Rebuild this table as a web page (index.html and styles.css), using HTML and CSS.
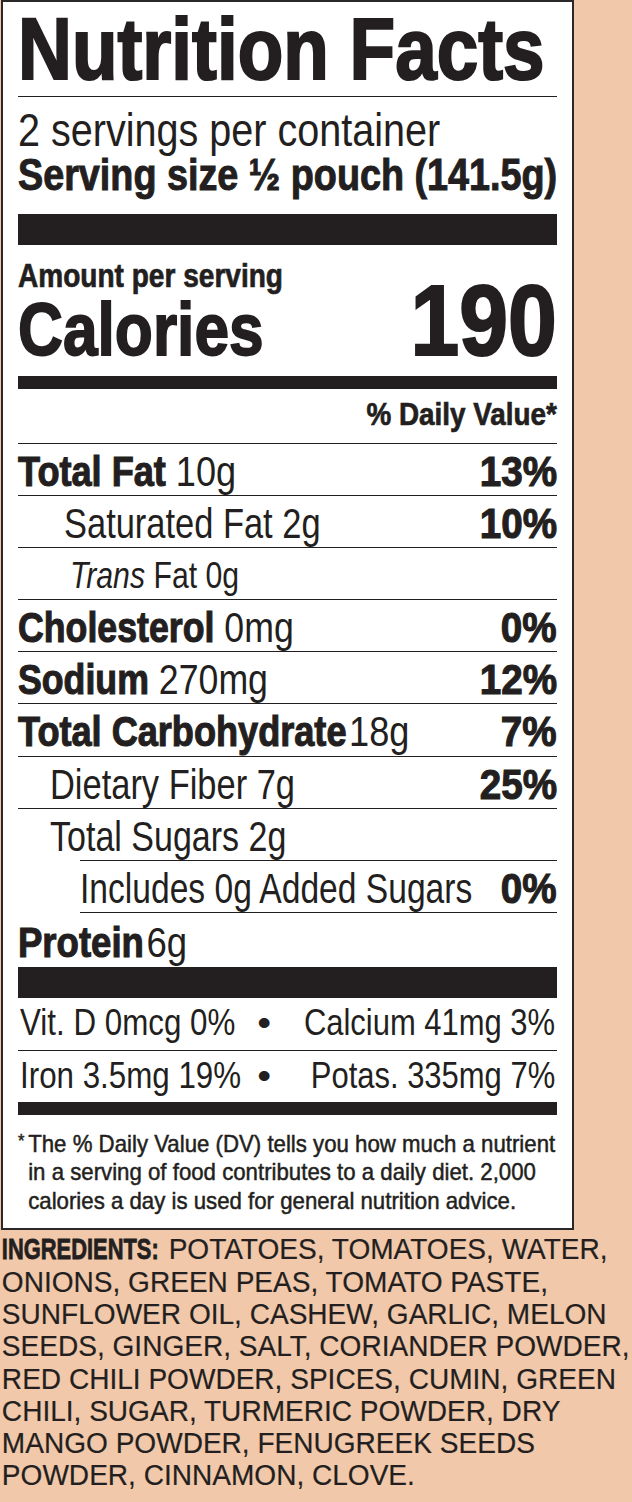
FILE: index.html
```html
<!DOCTYPE html>
<html lang="en">
<head>
<meta charset="utf-8">
<title>Nutrition Facts</title>
<link rel="stylesheet" href="styles.css">
</head>
<body>
<section class="label">
  <h1 class="title"><span class="cond">Nutrition Facts</span></h1>
  <div class="servings">
    <p class="per-container"><span class="cond">2 servings per container</span></p>
    <p class="serving-size"><span class="cond">Serving size ½ pouch (141.5g)</span></p>
  </div>
  <div class="bar bar-thick"></div>
  <div class="calories">
    <p class="amount"><span class="cond">Amount per serving</span></p>
    <div class="cal-row">
      <span class="cal-label">Calories</span>
      <span class="cal-value">190</span>
    </div>
  </div>
  <div class="bar bar-medium"></div>
  <p class="dv-head"><span class="cond">% Daily Value*</span></p>
  <ul class="nutrients">
    <li class="row"><span class="name sx86"><b>Total Fat</b> 10g</span><b class="dv">13%</b></li>
    <li class="row indent-sat"><span class="name sx82">Saturated Fat 2g</span><b class="dv">10%</b></li>
    <li class="row row-trans"><span class="name sx84"><i>Trans</i> Fat 0g</span></li>
    <li class="row"><span class="name sx85"><b>Cholesterol</b> 0mg</span><b class="dv">0%</b></li>
    <li class="row"><span class="name sx85"><b>Sodium</b> 270mg</span><b class="dv">12%</b></li>
    <li class="row"><span class="name sx86"><b>Total Carbohydrate</b><span class="tight">18g</span></span><b class="dv">7%</b></li>
    <li class="row indent-sub"><span class="name sx82">Dietary Fiber 7g</span><b class="dv">25%</b></li>
    <li class="row indent-sub no-line"><span class="name sx81">Total Sugars 2g</span></li>
    <li class="row added"><span class="name sx80">Includes 0g Added Sugars</span><b class="dv">0%</b></li>
    <li class="row protein"><span class="name sx87"><b>Protein</b><span class="tight">6g</span></span></li>
  </ul>
  <div class="bar bar-thick bar-protein"></div>
  <ul class="minerals">
    <li class="mrow"><span class="m-left">Vit. D 0mcg 0%</span><span class="dot">•</span><span class="m-right">Calcium 41mg 3%</span></li>
    <li class="mrow last"><span class="m-left">Iron 3.5mg 19%</span><span class="dot">•</span><span class="m-right">Potas. 335mg 7%</span></li>
  </ul>
  <div class="bar bar-medium bar-foot"></div>
  <p class="footnote"><span class="star">*</span>The % Daily Value (DV) tells you how much a nutrient<br>in a serving of food contributes to a daily diet. 2,000<br>calories a day is used for general nutrition advice.</p>
</section>
<p class="ingredients"><b class="ing-head">INGREDIENTS:</b> POTATOES, TOMATOES, WATER,<br>ONIONS, GREEN PEAS, TOMATO PASTE,<br>SUNFLOWER OIL, CASHEW, GARLIC, MELON<br>SEEDS, GINGER, SALT, CORIANDER POWDER,<br>RED CHILI POWDER, SPICES, CUMIN, GREEN<br>CHILI, SUGAR, TURMERIC POWDER, DRY<br>MANGO POWDER, FENUGREEK SEEDS<br>POWDER, CINNAMON, CLOVE.</p>
</body>
</html>
```

FILE: styles.css
```css
* {
  box-sizing: border-box;
  margin: 0;
  padding: 0;
}

html, body {
  background: #f1c8aa;
}

body {
  width: 632px;
  min-height: 1502px;
  overflow: hidden;
  font-family: "Liberation Sans", Arial, sans-serif;
  color: #231f20;
}

b { font-weight: 700; }

/* condensed type: Liberation Sans squeezed to Helvetica Condensed widths */
.cond {
  display: inline-block;
  white-space: nowrap;
  transform-origin: left center;
}

.label {
  margin-left: 1px;
  width: 573px;
  background: #fff;
  border: 2px solid #2b2829;
  padding: 2px 15px 13px 15px;
}

.title {
  font-size: 88px;
  line-height: 90px;
  font-weight: 700;
  padding-bottom: 2px;
  border-bottom: 1px solid #231f20;
  white-space: nowrap;
}

.title .cond {
  transform: scaleX(0.848);
  -webkit-text-stroke: 2.2px #231f20;
}

.servings {
  padding-top: 11px;
}

.per-container {
  font-size: 46px;
  line-height: 44px;
}

.per-container .cond {
  transform: scaleX(0.86);
}

.serving-size {
  font-size: 44px;
  line-height: 46px;
  font-weight: 700;
}

.serving-size .cond {
  transform: scaleX(0.858);
  -webkit-text-stroke: 1px #231f20;
}

.bar {
  background: #231f20;
}

.bar-thick {
  height: 31px;
  margin-top: 16px;
}

.bar-medium {
  height: 13px;
  margin-top: 13px;
}

.calories {
  margin-top: 14px;
}

.amount {
  font-size: 33px;
  line-height: 33px;
  font-weight: 700;
}

.amount .cond {
  transform: scaleX(0.85);
  -webkit-text-stroke: 0.7px #231f20;
}

.cal-row {
  margin-top: 3px;
  display: grid;
  grid-template-columns: minmax(0, 1fr) auto;
  align-items: baseline;
  white-space: nowrap;
}

.cal-label {
  font-size: 75px;
  line-height: 68px;
  font-weight: 700;
  transform: scaleX(0.83);
  transform-origin: left center;
  -webkit-text-stroke: 1.8px #231f20;
}

.cal-value {
  font-size: 100px;
  line-height: 50px;
  font-weight: 700;
  transform: scaleX(0.877);
  transform-origin: right center;
  -webkit-text-stroke: 2.2px #231f20;
}

.dv-head {
  margin-top: 9px;
  font-size: 32px;
  line-height: 32px;
  font-weight: 700;
  text-align: right;
  padding-bottom: 13px;
  border-bottom: 1px solid #231f20;
}

.dv-head .cond {
  transform: scaleX(0.87);
  transform-origin: right center;
  -webkit-text-stroke: 0.7px #231f20;
}

.nutrients, .minerals {
  list-style: none;
}

.row {
  display: grid;
  grid-template-columns: minmax(0, 1fr) auto;
  align-items: baseline;
  font-size: 42px;
  line-height: 47.1px;
  padding-top: 4px;
  border-bottom: 1px solid #231f20;
  white-space: nowrap;
}

.row b {
  -webkit-text-stroke: 1.1px #231f20;
}

.name {
  transform-origin: left center;
}

.sx80 { transform: scaleX(0.80); }
.sx81 { transform: scaleX(0.81); }
.sx82 { transform: scaleX(0.82); }
.sx84 { transform: scaleX(0.84); }
.sx85 { transform: scaleX(0.85); }
.sx86 { transform: scaleX(0.86); }
.sx87 { transform: scaleX(0.87); }

.dv {
  transform: scaleX(0.92);
  transform-origin: right center;
}

.row .tight {
  margin-left: 3px;
}

.indent-sat { padding-left: 46px; }
.indent-sub { padding-left: 32px; }

.row-trans {
  padding-left: 52px;
  font-size: 36px;
}

.no-line { border-bottom: none; }

.added {
  margin-left: 62px;
  border-top: 1px solid #231f20;
}

.protein {
  border-bottom: none;
  padding-top: 6px;
  line-height: 48px;
}

.bar-protein {
  margin-top: 0;
}

.mrow {
  display: grid;
  grid-template-columns: 238px auto minmax(0, 1fr);
  align-items: baseline;
  font-size: 36px;
  line-height: 45px;
  padding: 2px 2px 5px 2px;
  border-bottom: 1px solid #231f20;
  white-space: nowrap;
}

.mrow.last {
  border-bottom: none;
  padding-bottom: 4px;
}

.m-left {
  transform: scaleX(0.87);
  transform-origin: left center;
}

.m-right {
  justify-self: end;
  transform: scaleX(0.86);
  transform-origin: right center;
}

.dot {
  transform: scaleX(1.1);
}

.bar-foot {
  margin-top: 0;
}

.footnote {
  margin-top: 12px;
  font-size: 24px;
  line-height: 28.5px;
  white-space: nowrap;
  -webkit-text-stroke: 0.5px #231f20;
  padding-left: 11px;
  text-indent: -11px;
  transform: scaleX(0.926);
  transform-origin: left top;
}

.star {
  display: inline-block;
  width: 11px;
  text-indent: 0;
  font-size: 18px;
  vertical-align: 5px;
}

.ingredients {
  margin-top: 3px;
  padding-left: 2px;
  font-size: 30px;
  line-height: 32.3px;
  white-space: nowrap;
  -webkit-text-stroke: 0.2px #231f20;
  transform: scaleX(0.935);
  transform-origin: left top;
}

.ing-head {
  display: inline-block;
  transform: scaleX(0.78);
  transform-origin: left center;
  margin-right: -45px;
  -webkit-text-stroke: 0.8px #231f20;
}
```
